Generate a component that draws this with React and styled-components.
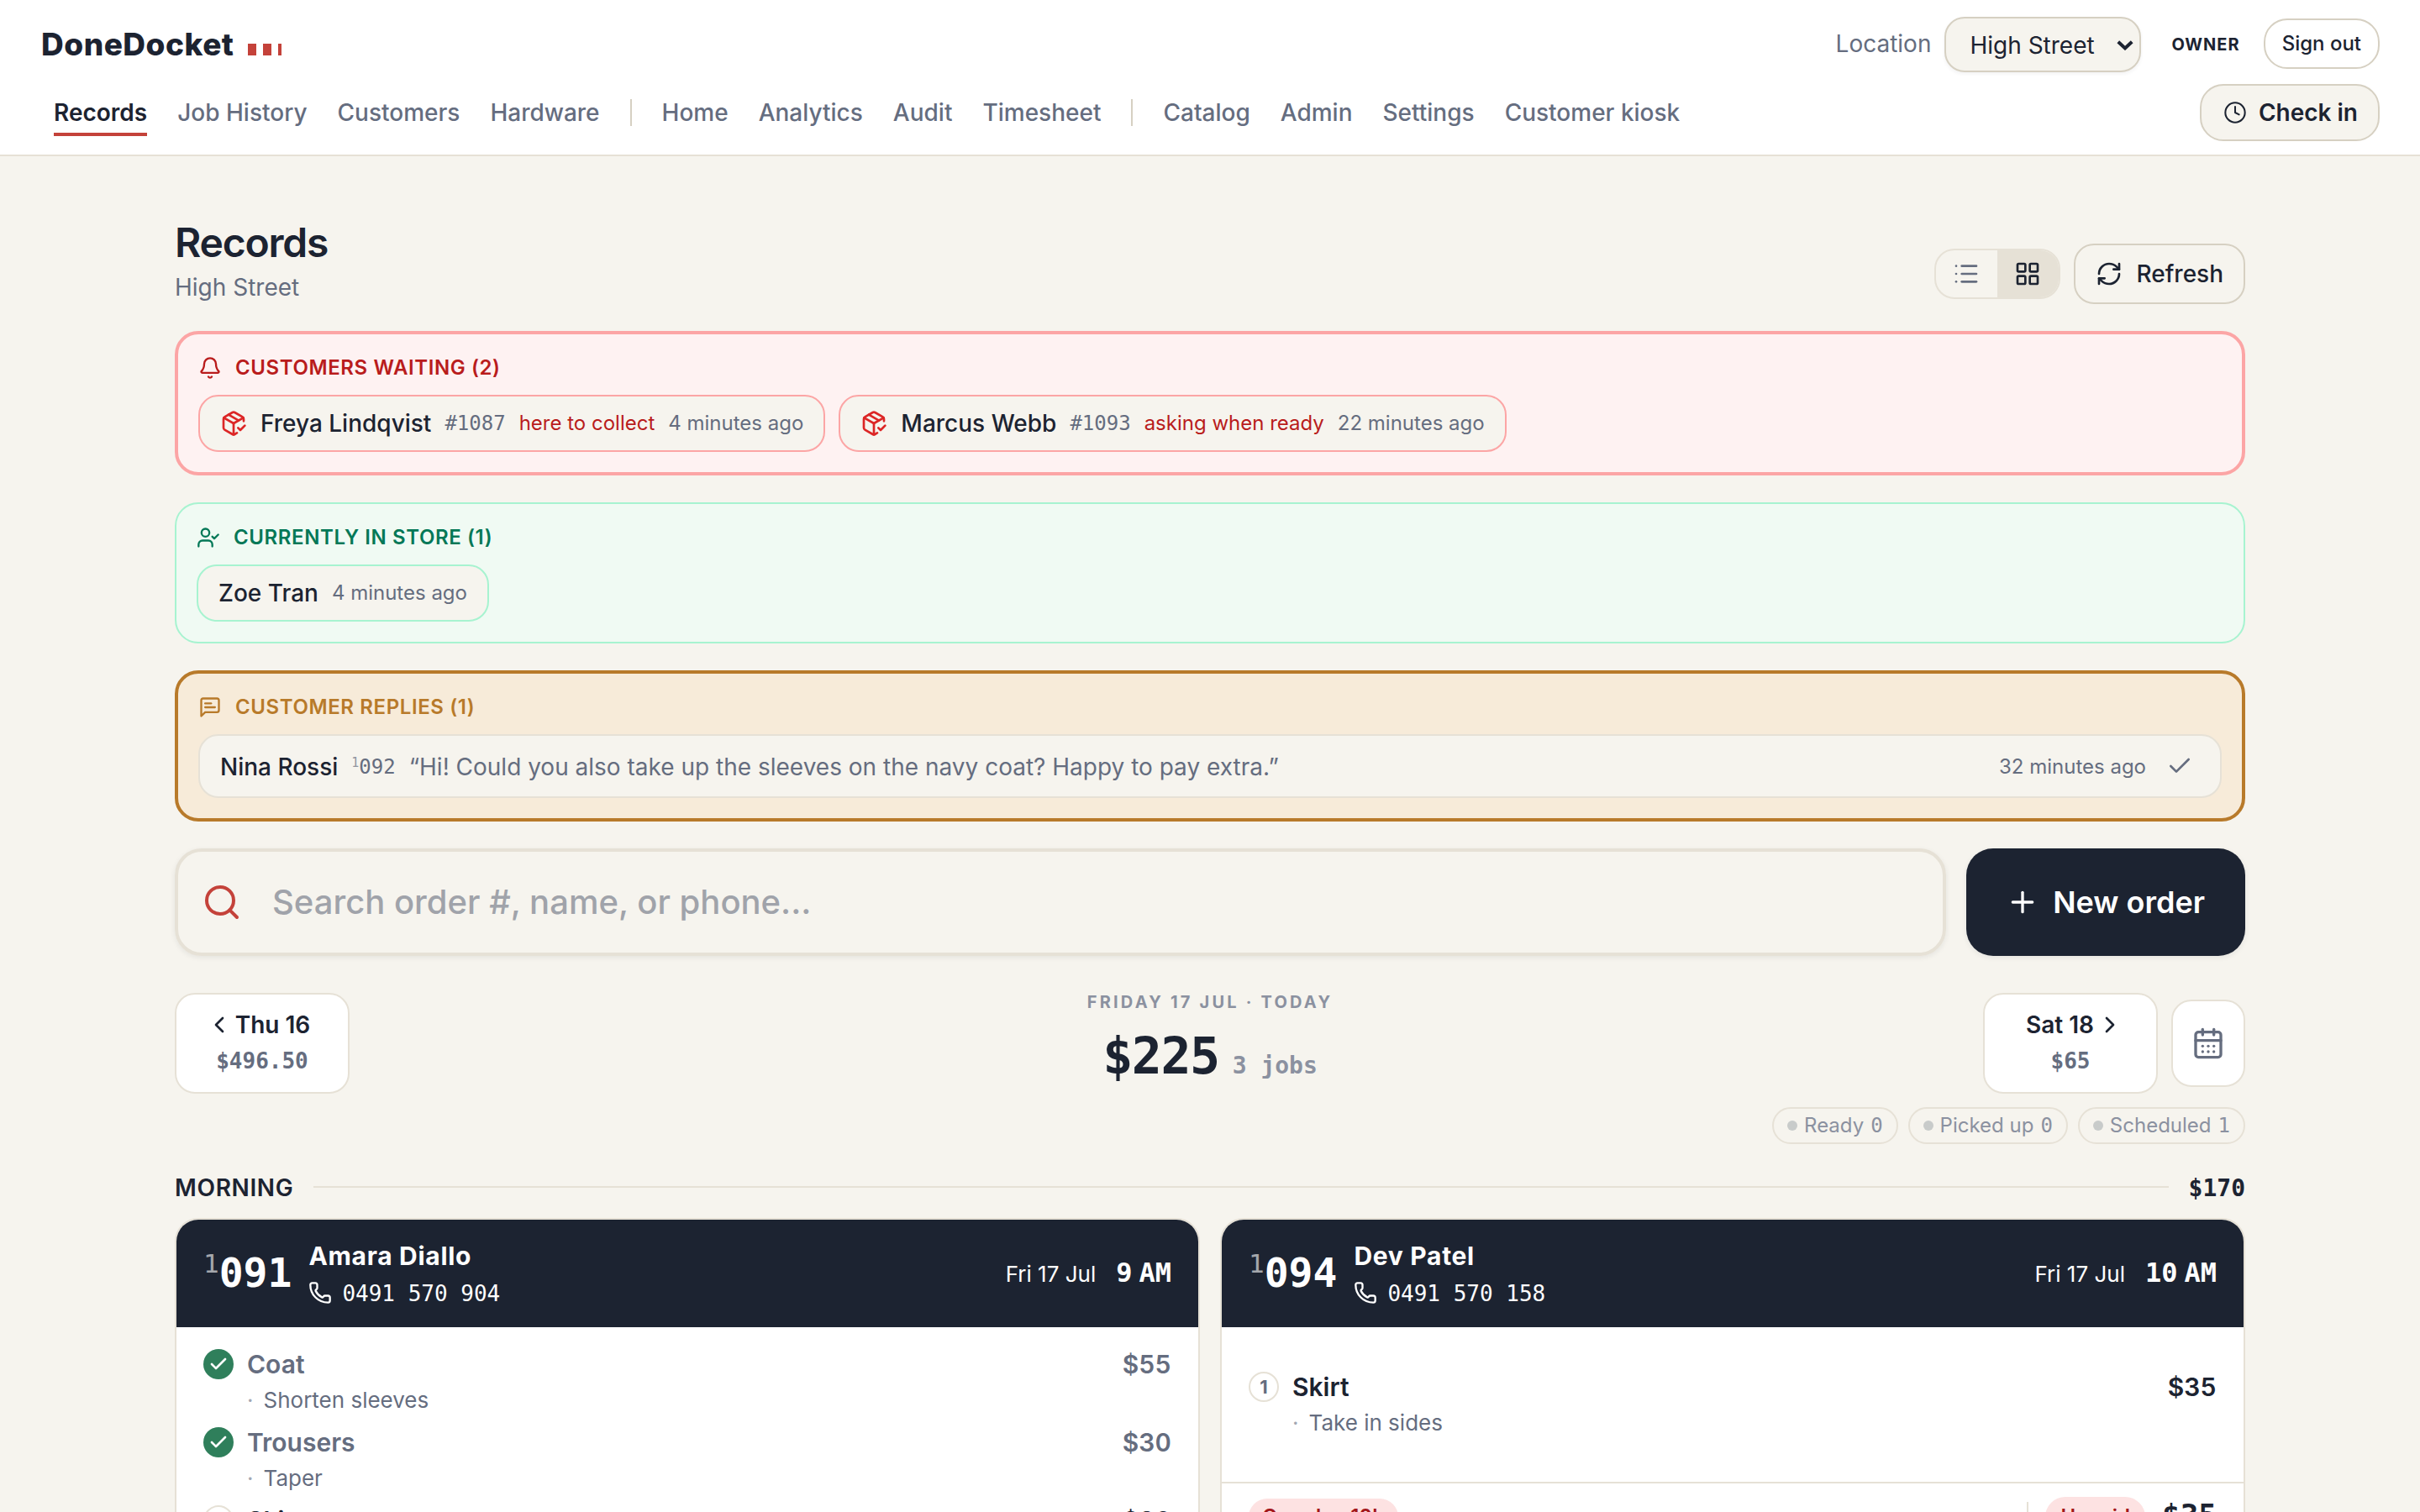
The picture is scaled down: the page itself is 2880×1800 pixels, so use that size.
import React from 'react'
import styled, { createGlobalStyle, css } from 'styled-components'
import {
  Bell,
  CalendarDays,
  Check,
  ChevronLeft,
  ChevronRight,
  Clock,
  LayoutGrid,
  List,
  PackageCheck,
  Phone,
  Plus,
  RefreshCw,
  Search,
  UserCheck,
} from 'lucide-react'

const ink = '#1c2331'
const muted = '#656d7f'
const faint = '#8b91a0'
const paper = '#f6f4ee'
const line = '#e6e1d6'
const lineStrong = '#d6d0c2'
const brand = '#c4423a'
const mono = "'DejaVu Sans Mono', 'Liberation Mono', monospace"

const navGroups = [
  ['Records', 'Job History', 'Customers', 'Hardware'],
  ['Home', 'Analytics', 'Audit', 'Timesheet'],
  ['Catalog', 'Admin', 'Settings', 'Customer kiosk'],
]

const waiting = [
  { name: 'Freya Lindqvist', order: '#1087', reason: 'here to collect', ago: '4 minutes ago' },
  { name: 'Marcus Webb', order: '#1093', reason: 'asking when ready', ago: '22 minutes ago' },
]

const statuses = [
  { label: 'Ready', count: 0 },
  { label: 'Picked up', count: 0 },
  { label: 'Scheduled', count: 1 },
]

const jobs = [
  {
    id: '091',
    name: 'Amara Diallo',
    phone: '0491 570 904',
    hour: '9',
    items: [
      { name: 'Coat', price: '$55', task: 'Shorten sleeves', done: true },
      { name: 'Trousers', price: '$30', task: 'Taper', done: true },
      { name: 'Skirt', price: '$30' },
    ],
  },
  {
    id: '094',
    name: 'Dev Patel',
    phone: '0491 570 158',
    hour: '10',
    items: [{ name: 'Skirt', price: '$35', task: 'Take in sides' }],
    footer: { overdue: 'Overdue 10h', payment: 'Unpaid', total: '$35' },
  },
]

// speech bubble with a square tail, two lines of text inside
const ReplyIcon = () => (
  <svg width="28" height="28" viewBox="0 0 24 24" fill="none" stroke="currentColor" strokeWidth="2" strokeLinecap="round" strokeLinejoin="round">
    <path d="M21 15a2 2 0 0 1-2 2H7l-4 4V5a2 2 0 0 1 2-2h14a2 2 0 0 1 2 2z" />
    <path d="M13 8H7" />
    <path d="M17 12H7" />
  </svg>
)

const JobCard = ({ job }) => (
  <Card>
    <CardHead>
      <OrderNo>
        <sup>1</sup>
        {job.id}
      </OrderNo>
      <Person>
        <PersonName>{job.name}</PersonName>
        <PhoneLine>
          <Phone size={28} />
          {job.phone}
        </PhoneLine>
      </Person>
      <Due>
        <span>Fri 17 Jul</span>
        <DueTime>
          <span>{job.hour}</span>
          <span>AM</span>
        </DueTime>
      </Due>
    </CardHead>
    <CardBody>
      {job.items.map((item) => (
        <Item key={item.name}>
          <ItemMark $done={item.done}>{item.done ? <Check size={24} strokeWidth={2.6} /> : 1}</ItemMark>
          <ItemText>
            <ItemTop $done={item.done}>
              <span>{item.name}</span>
              <span>{item.price}</span>
            </ItemTop>
            {item.task && (
              <ItemTask>
                <i>·</i>
                {item.task}
              </ItemTask>
            )}
          </ItemText>
        </Item>
      ))}
    </CardBody>
    {job.footer && (
      <CardFoot>
        <Badge>{job.footer.overdue}</Badge>
        <FootRight>
          <Badge $small>{job.footer.payment}</Badge>
          <Total>{job.footer.total}</Total>
        </FootRight>
      </CardFoot>
    )}
  </Card>
)

const App = () => {
  return (
    <>
      <GlobalStyle />
      <Header>
        <TopRow>
          <Brand>
            DoneDocket
            <BrandMark>
              <i />
              <i />
              <i />
            </BrandMark>
          </Brand>
          <Account>
            <LocationLabel>Location</LocationLabel>
            <LocationSelect>
              High Street
              <svg width="20" height="12" viewBox="0 0 20 12" fill="none" stroke="currentColor" strokeWidth="4">
                <path d="M1.8 1.8 10 9.4l8.2-7.6" />
              </svg>
            </LocationSelect>
            <Role>OWNER</Role>
            <SignOut>Sign out</SignOut>
          </Account>
        </TopRow>
        <NavRow>
          <Nav>
            {navGroups.map((group) => (
              <NavGroup key={group[0]}>
                {group.map((label) => (
                  <NavLink key={label} $active={label === 'Records'}>
                    {label}
                  </NavLink>
                ))}
              </NavGroup>
            ))}
          </Nav>
          <CheckIn>
            <Clock size={28} strokeWidth={1.75} />
            Check in
          </CheckIn>
        </NavRow>
      </Header>

      <Main>
        <PageHead>
          <div>
            <Title>Records</Title>
            <Subtitle>High Street</Subtitle>
          </div>
          <PageActions>
            <Toggle>
              <ToggleSide>
                <List size={32} />
              </ToggleSide>
              <ToggleSide $on>
                <LayoutGrid size={32} />
              </ToggleSide>
            </Toggle>
            <Refresh>
              <RefreshCw size={32} />
              Refresh
            </Refresh>
          </PageActions>
        </PageHead>

        <Panel $tone="red">
          <PanelTitle>
            <Bell size={28} />
            CUSTOMERS WAITING (2)
          </PanelTitle>
          <Chips>
            {waiting.map((w) => (
              <Chip key={w.order} $border="#fca5a5">
                <PackageCheck size={32} color="#dc2626" />
                <ChipName>{w.name}</ChipName>
                <Mono>{w.order}</Mono>
                <Reason>{w.reason}</Reason>
                <Ago>{w.ago}</Ago>
              </Chip>
            ))}
          </Chips>
        </Panel>

        <Panel $tone="green">
          <PanelTitle>
            <UserCheck size={28} />
            CURRENTLY IN STORE (1)
          </PanelTitle>
          <Chips>
            <Chip $border="#a7f3d0">
              <ChipName>Zoe Tran</ChipName>
              <Ago>4 minutes ago</Ago>
            </Chip>
          </Chips>
        </Panel>

        <Panel $tone="amber">
          <PanelTitle>
            <ReplyIcon />
            CUSTOMER REPLIES (1)
          </PanelTitle>
          <Reply>
            <ChipName>Nina Rossi</ChipName>
            <Mono>
              <sup>1</sup>092
            </Mono>
            <Quote>“Hi! Could you also take up the sleeves on the navy coat? Happy to pay extra.”</Quote>
            <Ago>32 minutes ago</Ago>
            <Dismiss>
              <Check size={32} />
            </Dismiss>
          </Reply>
        </Panel>

        <SearchRow>
          <SearchBox>
            <Search size={48} color={brand} />
            <span>Search order #, name, or phone...</span>
          </SearchBox>
          <NewOrder>
            <Plus size={40} />
            New order
          </NewOrder>
        </SearchRow>

        <DayRow>
          <DayCard>
            <DayName $side="left">
              <ChevronLeft size={32} />
              Thu 16
            </DayName>
            <DaySum>$496.50</DaySum>
          </DayCard>
          <Today>
            <TodayLabel>FRIDAY 17 JUL · TODAY</TodayLabel>
            <TodaySum>
              <b>$225</b>
              <span>3 jobs</span>
            </TodaySum>
          </Today>
          <DayRight>
            <DayCard>
              <DayName $side="right">
                Sat 18
                <ChevronRight size={32} />
              </DayName>
              <DaySum>$65</DaySum>
            </DayCard>
            <CalendarButton>
              <CalendarDays size={40} />
            </CalendarButton>
          </DayRight>
        </DayRow>

        <StatusRow>
          {statuses.map((s) => (
            <Status key={s.label}>
              <i />
              {s.label}
              <b>{s.count}</b>
            </Status>
          ))}
        </StatusRow>

        <SectionHead>
          <span>MORNING</span>
          <hr />
          <b>$170</b>
        </SectionHead>

        <Cards>
          {jobs.map((job) => (
            <JobCard key={job.id} job={job} />
          ))}
        </Cards>
      </Main>
    </>
  )
}

const GlobalStyle = createGlobalStyle`
  * {
    box-sizing: border-box;
  }

  body {
    margin: 0;
    height: 1800px;
    overflow: hidden;
    background: ${paper};
    color: ${ink};
    font-family: Inter, sans-serif;
    font-size: 28px;
    line-height: 40px;
  }

  svg {
    display: block;
    flex-shrink: 0;
  }
`

const Header = styled.header`
  padding: 20px 48px 16px;
  background: #fff;
  border-bottom: 2px solid ${line};
`

const TopRow = styled.div`
  display: flex;
  align-items: center;
  justify-content: space-between;
  height: 66px;
`

const Brand = styled.div`
  display: flex;
  align-items: center;
  gap: 16px;
  padding-left: 1px;
  font-size: 37px;
  font-weight: 800;
  letter-spacing: 0.5px;
`

const BrandMark = styled.span`
  display: flex;
  gap: 8px;
  margin-top: 12px;

  i {
    width: 10px;
    height: 14px;
    background: ${brand};
  }

  i:last-child {
    width: 4px;
  }
`

const Account = styled.div`
  display: flex;
  align-items: center;
`

const LocationLabel = styled.span`
  margin: -2px 16px 0 0;
  color: ${muted};
`

const LocationSelect = styled.div`
  display: flex;
  align-items: center;
  justify-content: space-between;
  width: 234px;
  height: 66px;
  padding: 2px 7px 0 28px;
  background: ${paper};
  border: 2px solid ${lineStrong};
  border-radius: 24px;
  box-shadow: 0 2px 4px rgba(28, 35, 49, 0.06);
`

const Role = styled.span`
  margin: 0 28px 0 36px;
  font-size: 20px;
  font-weight: 700;
  letter-spacing: 1px;
`

const SignOut = styled.div`
  margin-top: -2px;
  padding: 0 20px;
  font-size: 24px;
  font-weight: 500;
  line-height: 56px;
  border: 2px solid ${lineStrong};
  border-radius: 28px;
`

const NavRow = styled.div`
  display: flex;
  align-items: center;
  justify-content: space-between;
  height: 68px;
  margin-top: 14px;
`

const Nav = styled.nav`
  display: flex;
  padding-left: 16px;
`

const NavGroup = styled.div`
  display: flex;
  align-items: center;
  gap: 36px;

  & + &::before {
    content: '';
    width: 2px;
    height: 32px;
    margin-left: 36px;
    background: ${lineStrong};
  }
`

const NavLink = styled.a`
  padding: 4px 0;
  color: ${({ $active }) => ($active ? ink : muted)};
  font-weight: ${({ $active }) => ($active ? 600 : 500)};
  border-top: 4px solid transparent;
  border-bottom: 4px solid ${({ $active }) => ($active ? brand : 'transparent')};
`

const CheckIn = styled.div`
  display: flex;
  align-items: center;
  gap: 14px;
  height: 68px;
  padding: 0 24px 0 26px;
  font-weight: 600;
  background: ${paper};
  border: 2px solid ${lineStrong};
  border-radius: 28px;
`

const Main = styled.main`
  width: 2464px;
  margin: 0 auto;
  padding-top: 72px;
`

const PageHead = styled.div`
  display: flex;
  align-items: flex-end;
  justify-content: space-between;
  margin-bottom: 32px;
`

const Title = styled.h1`
  margin: 0 0 2px;
  font-size: 48px;
  font-weight: 600;
  line-height: 62px;
  letter-spacing: -1.2px;
`

const Subtitle = styled.div`
  color: ${muted};
`

const PageActions = styled.div`
  display: flex;
  align-items: center;
  gap: 16px;
`

const Toggle = styled.div`
  display: flex;
  height: 60px;
  overflow: hidden;
  border: 2px solid ${line};
  border-radius: 24px;
`

const ToggleSide = styled.div`
  display: flex;
  align-items: center;
  justify-content: center;
  width: 73px;
  color: ${({ $on }) => ($on ? ink : muted)};
  background: ${({ $on }) => ($on ? line : 'transparent')};
`

const Refresh = styled.div`
  display: flex;
  align-items: center;
  gap: 17px;
  height: 72px;
  padding: 0 24px;
  font-weight: 500;
  border: 2px solid ${lineStrong};
  border-radius: 24px;
`

const tones = {
  red: css`
    color: #b91c1c;
    background: #fef2f2;
    border: 4px solid #fca5a5;
  `,
  green: css`
    color: #047857;
    background: #f0faf3;
    border: 2px solid #a7f3d0;
  `,
  amber: css`
    color: #b87a2a;
    background: #f7ebd9;
    border: 4px solid #b87a2a;
  `,
}

const Panel = styled.section`
  margin-bottom: 32px;
  padding: 24px;
  border-radius: 28px;
  ${({ $tone }) => tones[$tone]}
`

const PanelTitle = styled.div`
  display: flex;
  align-items: center;
  gap: 16px;
  margin-bottom: 16px;
  font-size: 24px;
  font-weight: 600;
  line-height: 32px;
  letter-spacing: 0.6px;
`

const Chips = styled.div`
  display: flex;
  gap: 16px;
`

const Chip = styled.div`
  display: flex;
  align-items: center;
  gap: 16px;
  height: 68px;
  padding: 0 24px;
  background: ${paper};
  border: 2px solid ${({ $border }) => $border};
  border-radius: 24px;
`

const ChipName = styled.span`
  color: ${ink};
  font-weight: 500;
`

const Mono = styled.span`
  color: ${muted};
  font-family: ${mono};
  font-size: 24px;

  sup {
    font-size: 15px;
    line-height: 0;
    vertical-align: 8px;
    opacity: 0.7;
  }
`

const Reason = styled.span`
  font-size: 24px;
`

const Ago = styled.span`
  color: ${muted};
  font-size: 24px;
`

const Reply = styled.div`
  display: flex;
  align-items: center;
  gap: 16px;
  height: 76px;
  padding: 2px 24px 0;
  background: ${paper};
  border: 2px solid ${line};
  border-radius: 24px;
`

const Quote = styled.span`
  flex: 1;
  color: ${muted};
`

const Dismiss = styled.div`
  margin-top: -2px;
  padding: 0 8px;
  color: ${muted};
`

const SearchRow = styled.div`
  display: flex;
  gap: 24px;
  height: 128px;
`

const SearchBox = styled.div`
  flex: 1;
  display: flex;
  align-items: center;
  gap: 36px;
  padding-left: 28px;
  color: #a0a3aa;
  font-size: 40px;
  font-weight: 500;
  border: 4px solid ${line};
  border-radius: 32px;
  box-shadow: 0 2px 6px rgba(28, 35, 49, 0.08);
`

const NewOrder = styled.div`
  display: flex;
  align-items: center;
  gap: 16px;
  padding: 0 48px 0 47px;
  color: #fff;
  font-size: 36px;
  font-weight: 600;
  background: ${ink};
  border-radius: 32px;
  box-shadow: 0 2px 6px rgba(28, 35, 49, 0.08);
`

const DayRow = styled.div`
  display: grid;
  grid-template-columns: 1fr auto 1fr;
  height: 120px;
  margin-top: 44px;
`

const DayCard = styled.div`
  width: 208px;
  height: 120px;
  padding-top: 16px;
  text-align: center;
  background: #fff;
  border: 2px solid ${line};
  border-radius: 24px;
`

const DayName = styled.div`
  display: flex;
  align-items: center;
  justify-content: center;
  gap: 3px;
  font-weight: 600;

  svg {
    margin-${({ $side }) => $side}: -10px;
  }
`

const DaySum = styled.div`
  margin-top: 3px;
  color: ${muted};
  font-family: ${mono};
  font-size: 26px;
  font-weight: 600;
`

const Today = styled.div`
  text-align: center;
`

const TodayLabel = styled.div`
  color: ${faint};
  font-size: 20px;
  font-weight: 700;
  line-height: 22px;
  letter-spacing: 3.2px;
`

const TodaySum = styled.div`
  display: flex;
  align-items: baseline;
  justify-content: center;
  gap: 16px;
  margin-top: 23px;
  font-family: ${mono};
  line-height: 60px;

  b {
    font-size: 60px;
    letter-spacing: -1.5px;
  }

  span {
    color: ${faint};
    font-weight: 600;
  }
`

const DayRight = styled.div`
  display: flex;
  align-items: center;
  justify-content: flex-end;
  gap: 16px;
`

const CalendarButton = styled.div`
  display: flex;
  align-items: center;
  justify-content: center;
  width: 88px;
  height: 104px;
  color: ${muted};
  background: #fff;
  border: 2px solid ${line};
  border-radius: 24px;
`

const StatusRow = styled.div`
  display: flex;
  justify-content: flex-end;
  gap: 12px;
  margin-top: 16px;
`

const Status = styled.div`
  display: flex;
  align-items: center;
  gap: 8px;
  height: 44px;
  padding: 0 16px;
  color: ${faint};
  font-size: 24px;
  border: 2px solid ${line};
  border-radius: 22px;

  i {
    width: 12px;
    height: 12px;
    background: #c8cbca;
    border-radius: 50%;
  }

  b {
    font-family: ${mono};
    font-weight: 400;
  }
`

const SectionHead = styled.div`
  display: flex;
  align-items: center;
  gap: 24px;
  height: 40px;
  margin: 32px 0 16px;
  font-weight: 600;
  letter-spacing: 0.65px;

  hr {
    flex: 1;
    height: 2px;
    margin: -2px 0 0;
    background: ${line};
    border: 0;
  }

  b {
    margin-top: 1px;
    font-family: ${mono};
    letter-spacing: 0;
  }
`

const Cards = styled.div`
  display: grid;
  grid-template-columns: 1fr 1fr;
  align-items: start;
  gap: 24px;
`

const Card = styled.article`
  overflow: hidden;
  background: #fff;
  border: 2px solid ${line};
  border-radius: 28px;
`

const CardHead = styled.div`
  display: flex;
  align-items: center;
  height: 128px;
  padding: 0 32px;
  color: #fff;
  background: ${ink};
`

const OrderNo = styled.div`
  margin-top: -2px;
  font-family: ${mono};
  font-size: 48px;
  font-weight: 700;

  sup {
    font-size: 31px;
    font-weight: 400;
    line-height: 0;
    vertical-align: 17px;
    opacity: 0.6;
  }
`

const Person = styled.div`
  display: flex;
  flex-direction: column;
  gap: 5px;
  margin: 3px 0 0 20px;
`

const PersonName = styled.div`
  font-size: 30px;
  font-weight: 700;
  letter-spacing: 0.7px;
`

const PhoneLine = styled.div`
  display: flex;
  align-items: center;
  gap: 12px;
  font-family: ${mono};
  font-size: 26px;

  svg {
    margin-top: -2px;
  }
`

const Due = styled.div`
  display: flex;
  align-items: baseline;
  gap: 24px;
  margin-left: auto;
  font-size: 26px;
`

const DueTime = styled.div`
  display: flex;
  gap: 8px;
  font-family: ${mono};
  font-size: 32px;
  font-weight: 700;
`

const CardBody = styled.div`
  display: flex;
  flex-direction: column;
  justify-content: center;
  gap: 14px;
  min-height: 184px;
  padding: 26px 32px;
`

const Item = styled.div`
  display: flex;
  gap: 16px;
`

const ItemMark = styled.div`
  display: flex;
  align-items: center;
  justify-content: center;
  width: 36px;
  height: 36px;
  color: ${({ $done }) => ($done ? '#fff' : muted)};
  font-size: 22px;
  font-weight: 700;
  background: ${({ $done }) => ($done ? '#2f7f5b' : '#fff')};
  border: ${({ $done }) => ($done ? 0 : `2px solid ${line}`)};
  border-radius: 50%;
`

const ItemText = styled.div`
  flex: 1;
`

const ItemTop = styled.div`
  display: flex;
  justify-content: space-between;
  color: ${({ $done }) => ($done ? muted : ink)};
  font-size: 30px;
  font-weight: 600;
  font-variant-numeric: tabular-nums;
  line-height: 36px;
`

const ItemTask = styled.div`
  display: flex;
  gap: 12px;
  margin-top: 7px;
  color: ${muted};
  font-size: 26px;
  line-height: 36px;

  i {
    font-style: normal;
    opacity: 0.6;
  }
`

const CardFoot = styled.div`
  display: flex;
  align-items: center;
  justify-content: space-between;
  height: 82px;
  padding: 0 32px;
  border-top: 2px solid ${line};
`

const FootRight = styled.div`
  display: flex;
  align-items: center;
  gap: 20px;
  height: 36px;
  padding-left: 20px;
  border-left: 2px solid ${line};
`

const Badge = styled.span`
  padding: ${({ $small }) => ($small ? '4px 18px' : '2px 16px')};
  color: #a3161a;
  font-size: 24px;
  font-weight: 600;
  background: #fde2e2;
  border-radius: 24px;
`

const Total = styled.span`
  margin-top: -4px;
  font-family: ${mono};
  font-size: 36px;
  font-weight: 700;
`

export default App
